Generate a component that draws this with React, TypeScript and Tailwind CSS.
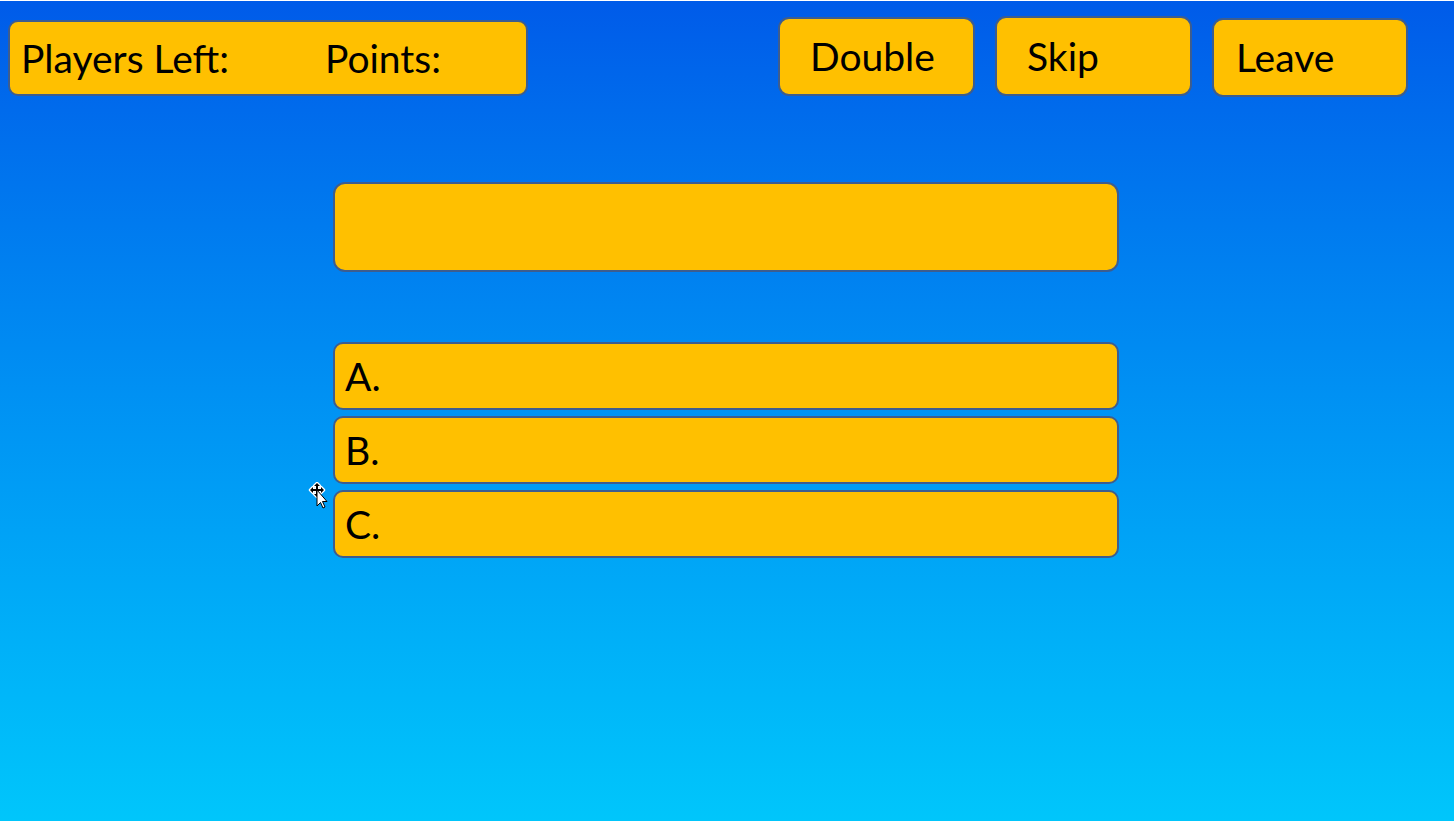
import React from "react";

const box = "bg-[#ffc000] border-2 border-[#3d5d8f] text-black";

function Cursor() {
  return (
    <svg className="absolute left-[307px] top-[481px]" width="24" height="28" viewBox="0 0 24 28">
      <g stroke="#fff" strokeWidth="2.5" fill="#000" strokeLinejoin="round">
        <path d="M10 1 L13 4 L11 4 L11 7 L14 7 L14 5 L17 8 L14 11 L14 9 L11 9 L11 12 L13 12 L10 15 L7 12 L9 12 L9 9 L6 9 L6 11 L3 8 L6 5 L6 7 L9 7 L9 4 L7 4 Z" />
      </g>
      <path d="M10 1 L13 4 L11 4 L11 7 L14 7 L14 5 L17 8 L14 11 L14 9 L11 9 L11 12 L13 12 L10 15 L7 12 L9 12 L9 9 L6 9 L6 11 L3 8 L6 5 L6 7 L9 7 L9 4 L7 4 Z" fill="#000" />
      <path d="M10 8 L10 24 L13.5 20.5 L16 26 L18 25 L15.5 19.5 L20 19.5 Z" fill="#fff" stroke="#000" strokeWidth="1" strokeLinejoin="round" />
    </svg>
  );
}

export default function App() {
  return (
    <div
      className="relative w-[1454px] h-[821px] overflow-hidden border-t border-white bg-gradient-to-b from-[#005be9] to-[#00c6fb] text-black"
      style={{ fontFamily: "Lato, 'Open Sans', sans-serif" }}
    >
      <div className="flex items-start pt-[16px] pl-[8px]">
        <div className={`${box} w-[520px] h-[76px] mt-[3px] rounded-[10px] flex items-center text-[39px] leading-none`}>
          <span className="pl-[11px] w-[315px]">Players Left:</span>
          <span>Points:</span>
        </div>
        <div className="flex ml-[250px] gap-[20px]">
          <div className={`${box} w-[197px] h-[79px] mt-[0px] rounded-[11px] flex items-center pl-[30px] text-[39px] leading-none`}>Double</div>
          <div className={`${box} w-[197px] h-[80px] -mt-[1px] rounded-[11px] flex items-center pl-[30px] text-[39px] leading-none`}>Skip</div>
          <div className={`${box} w-[196px] h-[79px] mt-[1px] rounded-[11px] flex items-center pl-[22px] text-[39px] leading-none`}>Leave</div>
        </div>
      </div>
      <div className="flex flex-col items-center mt-[85px] pr-[2px]">
        <div className={`${box} w-[786px] h-[90px] rounded-[12px]`} />
        <div className="flex flex-col gap-[6px] mt-[70px]">
          {["A.", "B.", "C."].map((l) => (
            <div key={l} className={`${box} w-[786px] h-[68px] rounded-[10px] flex items-center pl-[10px] text-[39px] leading-none`}>
              {l}
            </div>
          ))}
        </div>
      </div>
      <Cursor />
    </div>
  );
}
